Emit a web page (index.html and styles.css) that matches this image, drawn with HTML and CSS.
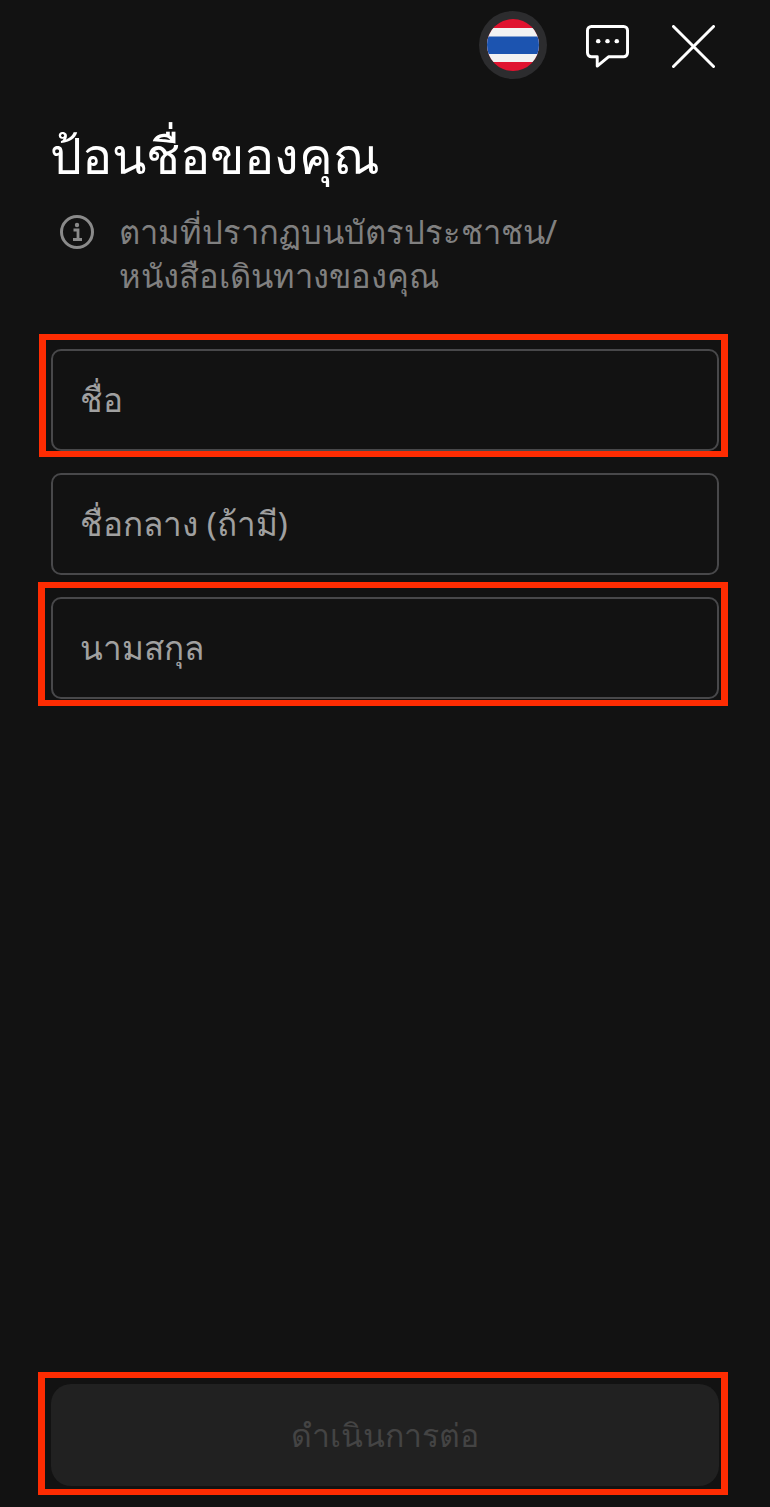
FILE: index.html
```html
<!DOCTYPE html>
<html lang="th">
<head>
<meta charset="utf-8">
<title>ป้อนชื่อของคุณ</title>
<link rel="stylesheet" href="styles.css">
</head>
<body>
<main class="screen">
  <header class="topbar">
    <span class="flag-ring">
      <svg class="flag" viewBox="0 0 52 52" aria-hidden="true">
        <defs><clipPath id="flag-clip"><circle cx="26" cy="26" r="26"/></clipPath></defs>
        <g clip-path="url(#flag-clip)">
          <rect width="52" height="52" fill="#e0132f"/>
          <rect y="9" width="52" height="34" fill="#f2f2f2"/>
          <rect y="17.5" width="52" height="17.5" fill="#1c54b0"/>
        </g>
      </svg>
    </span>
    <svg class="icon-chat" viewBox="0 0 44 44" aria-hidden="true">
      <path d="M5.500 1.500h33a4 4 0 0 1 4 4v23a4 4 0 0 1-4 4H23L11.500 42V32.500h-6a4 4 0 0 1-4-4v-23a4 4 0 0 1 4-4z" fill="none" stroke="#fff" stroke-width="3" stroke-linejoin="round"/>
      <circle cx="12.500" cy="16.500" r="2.300" fill="#fff"/>
      <circle cx="22" cy="16.500" r="2.300" fill="#fff"/>
      <circle cx="31.500" cy="16.500" r="2.300" fill="#fff"/>
    </svg>
    <svg class="icon-close" viewBox="0 0 44 44" aria-hidden="true">
      <path d="M1.500 1.500l41 41M42.500 1.500l-41 41" fill="none" stroke="#fff" stroke-width="3" stroke-linecap="round"/>
    </svg>
  </header>

  <h1 class="title">ป้อนชื่อของคุณ</h1>

  <div class="note">
    <svg class="icon-info" viewBox="0 0 34 34" aria-hidden="true">
      <circle cx="17" cy="17" r="15.500" fill="none" stroke="#8a8a8a" stroke-width="3"/>
      <circle cx="17" cy="10" r="2.200" fill="#8a8a8a"/>
      <path d="M13.500 15h4.500v9M13 24.500h9" fill="none" stroke="#8a8a8a" stroke-width="2.800"/>
    </svg>
    <p class="note-text">ตามที่ปรากฏบนบัตรประชาชน/<br>หนังสือเดินทางของคุณ</p>
  </div>

  <form class="fields">
    <div class="field field-first">ชื่อ</div>
    <div class="field">ชื่อกลาง (ถ้ามี)</div>
    <div class="field field-last">นามสกุล</div>
  </form>

  <div class="action">
    <button class="continue" type="button">ดำเนินการต่อ</button>
  </div>
</main>
</body>
</html>
```
FILE: styles.css
```css
* { box-sizing: border-box; }
html, body { margin: 0; height: 100%; background: #121212; }
body { font-family: "Noto Sans", "DejaVu Sans", sans-serif; overflow: hidden; }
.screen { height: 1507px; padding: 11px 51px 21px; display: flex; flex-direction: column; }
.topbar { display: flex; align-items: flex-start; justify-content: flex-end; height: 68px; padding-right: 4px; }
.flag-ring { width: 68px; height: 68px; border-radius: 50%; background: #2c2c2e; display: flex; align-items: center; justify-content: center; }
.flag { width: 52px; height: 52px; display: block; }
.icon-chat { width: 43px; height: 43px; margin: 14px 0 0 39px; display: block; }
.icon-close { width: 43px; height: 43px; margin: 14px 0 0 43px; display: block; }
.title { margin: 40px 0 0 -1px; color: #fff; font-size: 50.400px; line-height: 72px; font-weight: 400; white-space: nowrap; }
.note { display: flex; align-items: flex-start; margin-top: 19px; padding-left: 9px; }
.icon-info { width: 34px; height: 34px; margin-top: 5px; flex: none; }
.note-text { margin: 0 0 0 25px; color: #808080; font-size: 32.700px; line-height: 44px; white-space: nowrap; }
.fields { display: flex; flex-direction: column; gap: 22px; margin-top: 51px; }
.field { position: relative; height: 102px; border: 2px solid #48484a; border-radius: 10px; padding-left: 27px; display: flex; align-items: center; color: #a0a0a0; font-size: 33.300px; }
.field-first::after, .field-last::after { content: ""; position: absolute; border-style: solid; border-color: #fe2c02; border-width: 6px 7px; }
.field-first::after { inset: -17px -11px -8px -14px; }
.field-last::after { inset: -17px -11px -9px -15px; }
.action { position: relative; margin-top: auto; }
.action::after { content: ""; position: absolute; inset: -12px -9px -9px -13px; border-style: solid; border-color: #fe2c02; border-width: 6px 7px; pointer-events: none; }
.continue { display: block; width: 100%; height: 102px; border: 0; border-radius: 20px; background: #212121; color: #444; font: inherit; font-size: 32px; }
```
